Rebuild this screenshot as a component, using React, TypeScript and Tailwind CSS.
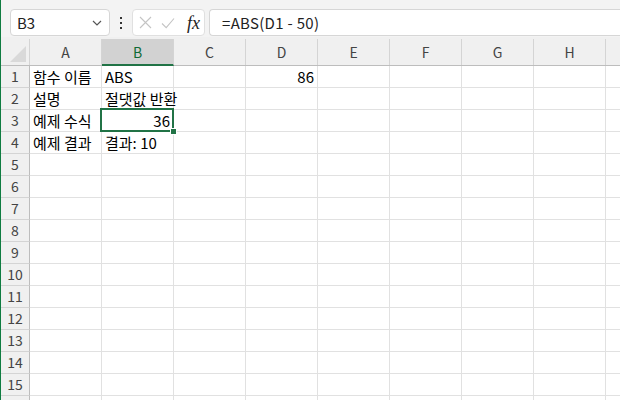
import React from "react";

const COLS = ["A", "B", "C", "D", "E", "F", "G", "H", "I"];
const ROWS = Array.from({ length: 16 }, (_, i) => i + 1);

type Cell = { text: string; align?: "left" | "right" };
const DATA: Record<string, Cell> = {
  A1: { text: "함수 이름" },
  B1: { text: "ABS" },
  D1: { text: "86", align: "right" },
  A2: { text: "설명" },
  B2: { text: "절댓값 반환" },
  A3: { text: "예제 수식" },
  B3: { text: "36", align: "right" },
  A4: { text: "예제 결과" },
  B4: { text: "결과: 10" },
};

const FONT = "font-['Noto_Sans_CJK_KR','Noto_Sans',sans-serif]";

export default function App() {
  return (
    <div className={`w-[620px] h-[400px] overflow-hidden flex bg-white ${FONT}`}>
      <div className="w-px shrink-0 bg-[#107c41]" />
      <div className="flex-1 flex flex-col min-w-0">
        {/* Toolbar */}
        <div className="h-[37px] shrink-0 bg-[#f3f3f3] flex items-start pt-[9px]">
          <div className="ml-[9px] w-[100px] h-[27px] bg-white border border-[#d6d6d6] rounded-[4px] flex items-center justify-between pl-[6px] pr-[7px]">
            <span className="text-[15px] text-[#222] leading-none">B3</span>
            <svg width="10" height="6" viewBox="0 0 10 6" fill="none">
              <path d="M1 1l4 4 4-4" stroke="#555" strokeWidth="1.2" />
            </svg>
          </div>
          <div className="w-[22px] h-[27px] flex flex-col items-center justify-center gap-[3px]">
            <div className="w-[2px] h-[2px] bg-[#333]" />
            <div className="w-[2px] h-[2px] bg-[#333]" />
            <div className="w-[2px] h-[2px] bg-[#333]" />
          </div>
          <div className="w-[73px] h-[27px] bg-white border border-[#e0e0e0] rounded-[4px] flex items-center pl-[6px]">
            <svg width="13" height="13" viewBox="0 0 13 13" fill="none">
              <path d="M1 1l11 11M12 1L1 12" stroke="#c4c4c4" strokeWidth="1.1" />
            </svg>
            <svg width="14" height="12" viewBox="0 0 14 12" fill="none" className="ml-[9px]">
              <path d="M1 6.5l4.2 4.2L13 1.5" stroke="#c4c4c4" strokeWidth="1.1" />
            </svg>
            <span className="ml-[12px] text-[18px] italic text-[#222] leading-none font-['Liberation_Serif',serif]">fx</span>
          </div>
          <div className="ml-[4px] flex-1 h-[27px] bg-white border border-[#d6d6d6] border-r-0 rounded-l-[4px] flex items-center pl-[12px]">
            <span className="text-[15px] tracking-[0.3px] text-[#222] leading-none">=ABS(D1 - 50)</span>
          </div>
        </div>

        {/* Column header */}
        <div className="h-[29px] shrink-0 flex bg-[#f0f0f0] border-b border-[#bdbdbd] pt-[2px]">
          <div className="w-[29px] shrink-0 border-r border-[#d4d4d4] relative">
            <svg width="16" height="16" viewBox="0 0 16 16" className="absolute right-[3px] bottom-[3px]">
              <path d="M16 0V16H0Z" fill="#d9d9d9" />
            </svg>
          </div>
          {COLS.map((c) => (
            <div
              key={c}
              className={`w-[72px] shrink-0 border-r border-[#d4d4d4] flex items-center justify-center text-[14px] leading-none ${
                c === "B"
                  ? "bg-[#d2d2d2] text-[#0f6b35] border-b-2 border-b-[#217346] -mb-px"
                  : "text-[#444]"
              }`}
            >
              {c === "I" ? "" : c}
            </div>
          ))}
        </div>

        {/* Rows */}
        {ROWS.map((r) => (
          <div key={r} className="h-[22px] shrink-0 flex">
            <div className="w-[29px] shrink-0 flex items-center justify-center pb-[1px] text-[14px] leading-none border-b border-[#d4d4d4] bg-[#f0f0f0] text-[#444] border-r border-r-[#bdbdbd]">
              {r < 16 ? r : ""}
            </div>
            {COLS.map((c) => {
              const key = `${c}${r}`;
              const cell = DATA[key];
              const selected = key === "B3";
              return (
                <div
                  key={key}
                  className={`w-[72px] shrink-0 border-r border-b border-[#e1e1e1] flex items-center px-[3px] pb-[1px] text-[15px] text-black leading-none whitespace-nowrap relative ${
                    cell?.align === "right" ? "justify-end" : "justify-start"
                  } ${selected ? "z-10" : ""}`}
                >
                  {cell?.text}
                  {selected && (
                    <>
                      <div className="absolute left-[-2px] top-[-2px] right-[-1px] bottom-[-1px] border-2 border-[#217346] pointer-events-none" />
                      <div className="absolute right-[-4px] bottom-[-4px] w-[5px] h-[5px] bg-[#217346] border border-white box-content" />
                    </>
                  )}
                </div>
              );
            })}
          </div>
        ))}
      </div>
    </div>
  );
}
